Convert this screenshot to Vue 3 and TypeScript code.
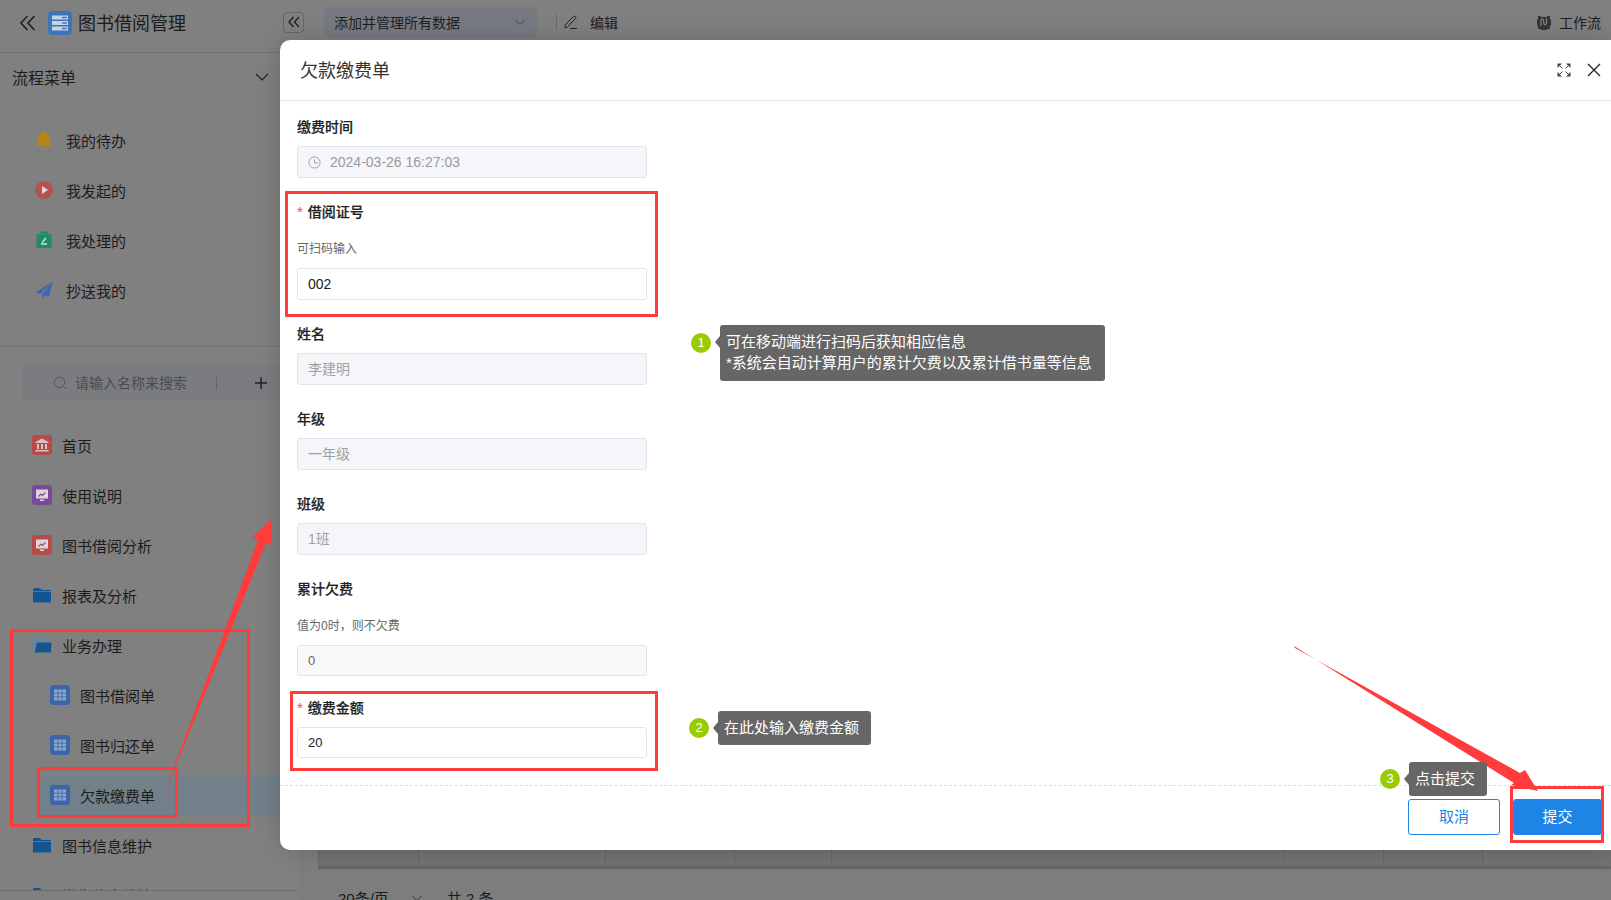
<script setup lang="ts">
const flowItems = [
  { label: '我的待办', icon: 'bell' },
  { label: '我发起的', icon: 'play' },
  { label: '我处理的', icon: 'clip' },
  { label: '抄送我的', icon: 'plane' }
]
const navItems = [
  { label: '首页', icon: 'bank' },
  { label: '使用说明', icon: 'chartPurple' },
  { label: '图书借阅分析', icon: 'chartRed' },
  { label: '报表及分析', icon: 'folder' },
  { label: '业务办理', icon: 'folderOpen' },
  { label: '图书借阅单', icon: 'table', sub: true },
  { label: '图书归还单', icon: 'table', sub: true },
  { label: '欠款缴费单', icon: 'table', sub: true, active: true },
  { label: '图书信息维护', icon: 'folder' },
  { label: '学生信息维护', icon: 'folder' }
]
const tableCols = [100, 187, 129, 97, 452, 100, 100]
const redBoxes = [
  { x: 11.5, y: 630.5, w: 237, h: 195 },
  { x: 38.5, y: 768.5, w: 138, h: 48 },
  { x: 286.5, y: 192.5, w: 370, h: 123 },
  { x: 291.5, y: 692.5, w: 365, h: 77 },
  { x: 1511.5, y: 787.5, w: 91, h: 54 }
]
</script>

<template>
  <div class="page">
    <aside class="sidebar">
      <div class="brand">
        <svg class="brand-back" viewBox="0 0 20 20" width="20" height="20"><path d="M9.5 3 3 10l6.500 7M16.500 3 10 10l6.500 7" fill="none" stroke="#222" stroke-width="1.700" /></svg>
        <svg viewBox="0 0 24 24" width="24" height="24"><rect width="24" height="24" rx="4" fill="#3f74b8" /><g fill="#c4d2e4"><rect x="4" y="4.500" width="16" height="4" /><rect x="4" y="10" width="16" height="4" /><rect x="4" y="15.500" width="16" height="4" /></g><g fill="#3f74b8"><rect x="14" y="5.800" width="5" height="1.400" /><rect x="14" y="11.300" width="5" height="1.400" /><rect x="14" y="16.800" width="5" height="1.400" /></g></svg>
        <span class="brand-title">图书借阅管理</span>
      </div>
      <div class="flow-head">
        <span>流程菜单</span>
        <svg viewBox="0 0 14 14" width="14" height="14"><path d="M1 4l6 6 6-6" fill="none" stroke="#222" stroke-width="1.200" /></svg>
      </div>
      <ul class="flow-list">
        <li v-for="item in flowItems" :key="item.label" class="flow-item">
          <svg viewBox="0 0 18 20" width="18" height="20">
            <path v-if="item.icon === 'bell'" d="M9 1c1 0 1.500.7 1.500 1.500C13.500 3.500 15 6 15 9v4l2.500 3h-17L3 13V9c0-3 1.500-5.500 4.500-6.500C7.500 1.700 8 1 9 1zM7 17.500h4C11 19 10 19.500 9 19.500S7 19 7 17.500z" fill="#b5851a" />
            <g v-else-if="item.icon === 'play'"><circle cx="9" cy="10" r="9" fill="#b5514f" /><path d="M7 6l6 4-6 4z" fill="#e4d6d6" /></g>
            <g v-else-if="item.icon === 'clip'"><rect x="1.500" y="4" width="15" height="14" rx="1" fill="#1f8a6c" /><rect x="5" y="1.500" width="8" height="2" fill="#1f8a6c" /><path d="M6 14h6M11 8l-4 4.500" stroke="#cfe3dc" stroke-width="1.300" fill="none" /></g>
            <path v-else d="M17.500 2 .5 12l5 2zM17.500 2 7 14.500V19l3-3.500 4 1.500z" fill="#3f66b0" />
          </svg>
          <span>{{ item.label }}</span>
        </li>
      </ul>
      <div class="search-wrap">
        <div class="search">
          <svg viewBox="0 0 14 14" width="14" height="14"><circle cx="6.500" cy="6.500" r="5.200" fill="none" stroke="#555" stroke-width="1" /><path d="M10.500 10.500l2.500 2.500" stroke="#555" /></svg>
          <span class="search-text">请输入名称来搜索</span>
          <i class="search-sep"></i>
          <svg class="search-plus" viewBox="0 0 12 12" width="12" height="12"><path d="M6 0v12M0 6h12" stroke="#222" stroke-width="1.500" /></svg>
        </div>
      </div>
      <ul class="nav">
        <li v-for="item in navItems" :key="item.label" class="nav-item" :class="{ sub: item.sub, active: item.active }">
          <svg viewBox="0 0 20 20" width="20" height="20">
            <g v-if="item.icon === 'bank'"><rect width="20" height="20" rx="3" fill="#b84a4a" /><path d="M10 3.500l6.500 3.500v1h-13V7zM5 9h2v5H5zM9 9h2v5H9zM13 9h2v5h-2zM3.500 15h13v1.500h-13z" fill="#dcc2c2" /></g>
            <g v-else-if="item.icon === 'chartPurple' || item.icon === 'chartRed'"><rect width="20" height="20" rx="3" :fill="item.icon === 'chartPurple' ? '#7a4a9a' : '#b84a4a'" /><path d="M4 4.500h12v9H4zM8 14.500h4v1.500H8z" fill="#dcd6de" /><path d="M6.500 11.500l2.500-2.500 1.500 1.500 3-3" fill="none" :stroke="item.icon === 'chartPurple' ? '#7a4a9a' : '#b84a4a'" stroke-width="1.200" /></g>
            <g v-else-if="item.icon === 'folder'"><path d="M1 4.500C1 3.500 1.500 3 2.500 3h5L10 5h8c.7 0 1 .4 1 1v10.500c0 .7-.4 1-1 1H2c-.7 0-1-.4-1-1z" fill="#14548f" /><path d="M1 6.500h18" stroke="#5f87ab" stroke-width=".7" /></g>
            <g v-else-if="item.icon === 'folderOpen'"><path d="M1 4.500C1 3.500 1.500 3 2.500 3h4.500L9.500 5H17c.7 0 1 .4 1 1v1H5L2 17.500H1z" fill="#5f87ab" /><path d="M5 7.500h14.500L19 16.500c0 .7-.4 1-1 1H2.500z" fill="#14548f" /></g>
            <g v-else><rect width="20" height="20" rx="3" fill="#3b66a8" /><path d="M4 4.500h12v11H4z" fill="#8fa5c8" /><path d="M8 4.500v11M12 4.500v11M4 8.200h12M4 11.800h12" stroke="#3b66a8" stroke-width=".8" /></g>
          </svg>
          <span>{{ item.label }}</span>
        </li>
      </ul>
      <div class="side-foot"></div>
    </aside>

    <main class="main">
      <div class="toolbar">
        <button class="collapse">
          <svg viewBox="0 0 14 14" width="14" height="14"><path d="M6.500 2 2 7l4.500 5M12 2 7.500 7l4.500 5" fill="none" stroke="#222" stroke-width="1.400" /></svg>
        </button>
        <div class="perm">
          <span>添加并管理所有数据</span>
          <svg viewBox="0 0 12 12" width="12" height="12"><path d="M1.500 4l4.500 4.500L10.500 4" fill="none" stroke="#444" stroke-width="1" /></svg>
        </div>
        <i class="tool-sep"></i>
        <svg viewBox="0 0 16 16" width="16" height="16"><path d="M2 13.500V11L10.500 2.500c.6-.6 1.400-.6 2 0s.6 1.400 0 2L4 13.500zM7 14.500h7" fill="none" stroke="#222" stroke-width="1" /></svg>
        <span class="edit">编辑</span>
        <div class="tool-right">
          <svg viewBox="0 0 16 17" width="16" height="17"><path d="M2 2h2.500l1 1h5l1-1H14v3l1 1v5l-1 1v3h-2.500l-1 1h-5l-1-1H2v-3l-1-1V6l1-1z" fill="#353535" /><path d="M5 12V6c0-2 2-2 2.500 0s0 5 1.500 5 1.500-2 1.500-4V4.500" fill="none" stroke="#999" stroke-width="1" /></svg>
          <span>工作流</span>
        </div>
      </div>
      <div class="table-row">
        <div v-for="(w, i) in tableCols" :key="i" class="cell" :class="'col-' + i">{{ i === 0 ? '2条' : '' }}</div>
      </div>
      <div class="pager">
        <span>20条/页</span>
        <svg viewBox="0 0 12 12" width="12" height="12"><path d="M1.500 4l4.500 4.500L10.500 4" fill="none" stroke="#333" stroke-width="1" /></svg>
        <span class="pager-total">共 2 条</span>
      </div>
    </main>

    <section class="modal">
      <header class="modal-head">
        <span class="modal-title">欠款缴费单</span>
        <svg class="icon-expand" viewBox="0 0 14 14" width="14" height="14"><g fill="#444"><path d="M.5.5H5L.5 5zM13.500.5H9L13.500 5zM.5 13.500H5L.5 9zM13.500 13.500H9L13.500 9z" /></g><path d="M2.500 2.500l3 3M11.500 2.500l-3 3M2.500 11.500l3-3M11.500 11.500l-3-3" stroke="#444" stroke-width="1" /></svg>
        <svg class="icon-close" viewBox="0 0 14 14" width="14" height="14"><path d="M1 1l12 12M13 1 1 13" stroke="#222" stroke-width="1.300" /></svg>
      </header>
      <div class="modal-body">
        <div class="field">
          <label class="label">缴费时间</label>
          <div class="input disabled">
            <svg viewBox="0 0 14 14" width="13" height="13"><circle cx="7" cy="7" r="6" fill="none" stroke="#999" /><path d="M7 3.500V7.500H10.500" fill="none" stroke="#999" /></svg>
            <span class="date">2024-03-26 16:27:03</span>
          </div>
        </div>
        <div class="field">
          <label class="label"><em>*</em>借阅证号</label>
          <div class="help help-a">可扫码输入</div>
          <div class="input">002</div>
        </div>
        <div class="field">
          <label class="label">姓名</label>
          <div class="input disabled cjk">李建明</div>
        </div>
        <div class="field">
          <label class="label">年级</label>
          <div class="input disabled cjk">一年级</div>
        </div>
        <div class="field">
          <label class="label">班级</label>
          <div class="input disabled cjk">1班</div>
        </div>
        <div class="field tight">
          <label class="label">累计欠费</label>
          <div class="help help-b">值为0时，则不欠费</div>
          <div class="input zero">0</div>
        </div>
        <div class="field">
          <label class="label"><em>*</em>缴费金额</label>
          <div class="input short">20</div>
        </div>
      </div>
      <footer class="modal-foot">
        <button class="btn ghost">取消</button>
        <button class="btn primary">提交</button>
      </footer>
    </section>

    <svg class="marks" viewBox="0 0 1611 900" width="1611" height="900">
      <rect v-for="(b, i) in redBoxes" :key="i" :x="b.x" :y="b.y" :width="b.w" :height="b.h" fill="none" stroke="#ff3b3b" stroke-width="3" />
      <polygon points="162,800 258,540 252,537 271,520 272,545 266,543" fill="#ff3b3b" />
      <polygon points="1294,646 1295,648 1520,773 1525,770 1538,791 1511,785 1514,783" fill="#ff3b3b" />
    </svg>

    <div class="note note-1">
      <b class="dot">1</b>
      <div class="tip">可在移动端进行扫码后获知相应信息<br />*系统会自动计算用户的累计欠费以及累计借书量等信息</div>
    </div>
    <div class="note note-2">
      <b class="dot">2</b>
      <div class="tip">在此处输入缴费金额</div>
    </div>
    <div class="note note-3">
      <b class="dot">3</b>
      <div class="tip">点击提交</div>
    </div>
  </div>
</template>

<style>
html, body { margin: 0; padding: 0; background: #808080; overflow: hidden; }
</style>

<style scoped>
.page {
  position: relative;
  width: 1611px;
  height: 900px;
  overflow: hidden;
  display: grid;
  grid-template-columns: 298px 1fr;
  background: #808080;
  color: #1c1c1c;
  font-family: "Liberation Sans", "Noto Sans CJK SC", sans-serif;
}
ul { list-style: none; margin: 0; padding: 0; }
.sidebar { display: flex; flex-direction: column; height: 900px; overflow: hidden; }
.brand {
  height: 53px; box-sizing: border-box; display: flex; align-items: center;
  padding: 0 0 6px 18px; border-bottom: 1px solid #747474;
  flex: none;
}
.brand-back { margin-right: 10px; }
.brand-title { font-size: 18px; margin-left: 6px; margin-top: -2px; }
.flow-head {
  flex: none; height: 48px; display: flex; align-items: center; justify-content: space-between;
  padding: 0 29px 0 12px; font-size: 16px; box-sizing: border-box;
}
.flow-list { flex: none; padding-top: 14px; height: 246px; box-sizing: border-box; border-bottom: 1px solid #747474; }
.flow-item { height: 50px; display: flex; align-items: center; padding-left: 35px; gap: 13px; font-size: 15px; }
.search-wrap { flex: none; padding: 18px 0 20px 22px; }
.search {
  height: 35px; background: #7a7c80; border-radius: 4px; display: flex; align-items: center;
  padding-left: 31px; font-size: 14px; color: #4c4c4c;
}
.search-text { margin: -2px 0 0 8px; }
.search-sep { width: 1px; height: 15px; background: #666; margin-left: 29px; }
.search-plus { margin-left: 38px; }
.nav { flex: 1; min-height: 0; overflow: hidden; display: flex; flex-direction: column; gap: 10px; padding-top: 5px; }
.nav-item {
  flex: none; height: 40px; display: flex; align-items: center; gap: 10px;
  padding-left: 32px; font-size: 15px;
}
.nav-item.sub { margin-left: 40px; padding-left: 10px; }
.nav-item.active { background: #72808a; }
.side-foot { flex: none; height: 9px; border-top: 1px solid #6e6e6e; background: #808080; }

.main { display: flex; flex-direction: column; height: 900px; background: linear-gradient(#808080 100px, #7d7d7d 100px); }
.toolbar { flex: none; height: 44px; display: flex; align-items: center; padding-right: 10px; }
.collapse {
  flex: none; width: 21px; height: 21px; margin-left: -15px; padding: 0; display: flex; align-items: center; justify-content: center;
  background: none; border: 1px solid #666; border-radius: 4px;
}
.perm {
  width: 213px; height: 31px; box-sizing: border-box; margin-left: 20px; background: #777a80; border-radius: 4px;
  display: flex; align-items: center; justify-content: space-between; padding: 0 11px 0 10px; font-size: 14px; color: #1f1f1f;
}
.tool-sep { width: 1px; height: 16px; background: #6c6c6c; margin: 0 6px 0 19px; }
.edit { font-size: 14px; margin-left: 11px; }
.tool-right { margin-left: auto; display: flex; align-items: center; gap: 7px; font-size: 14px; }
.table-row {
  flex: none; margin: 781px 0 0 20px; height: 44px; box-sizing: border-box; display: flex;
  border-bottom: 3px solid #666; background: #727272;
}
.cell { box-sizing: border-box; border-left: 1px solid #666; font-size: 14px; text-align: center; line-height: 24px; color: #222; flex: none; }
.col-0 { width: 100px; }
.col-1 { width: 187px; }
.col-2 { width: 129px; }
.col-3 { width: 97px; }
.col-4 { width: 452px; }
.col-5 { width: 100px; }
.col-6 { width: 100px; border-right: 1px solid #666; }
.pager { flex: none; display: flex; align-items: center; padding: 17px 0 0 40px; font-size: 15px; height: 40px; box-sizing: border-box; }
.pager svg { margin-left: 22px; }
.pager-total { margin-left: 24px; }

.modal {
  position: absolute; left: 280px; top: 40px; width: 1331px; height: 810px;
  background: #fff; border-radius: 10px 0 0 10px; display: flex; flex-direction: column;
  box-shadow: 0 0 24px rgba(0, 0, 0, .18); color: #222;
}
.modal-head {
  flex: none; height: 61px; box-sizing: border-box; display: flex; align-items: center;
  padding: 0 10px 0 20px; border-bottom: 1px solid #e4e4e4;
}
.modal-title { font-size: 18px; color: #333; margin-top: -3px; }
.icon-expand { margin-left: auto; margin-right: 16px; }
.modal-body { flex: 1; min-height: 0; padding: 15px 0 0 17px; }
.field { width: 350px; margin-bottom: 23px; }
.field.tight { margin-bottom: 21px; }
.label { display: block; height: 22px; line-height: 22px; font-size: 14px; font-weight: 500; -webkit-text-stroke: .2px #222; margin-bottom: 8px; }
.label em { font-style: normal; color: #f44; margin-right: 5px; font-size: 15px; -webkit-text-stroke: 0; }
.help { font-size: 12px; line-height: 20px; color: #666; }
.help-a { padding-top: 8px; margin-bottom: 9px; }
.help-b { padding-top: 8px; margin-bottom: 9px; }
.input {
  height: 32px; box-sizing: border-box; border: 1px solid #e2e4ec; border-radius: 3px; padding-left: 10px;
  display: flex; align-items: center; gap: 9px; font-size: 14px; color: #222;
}
.input.disabled { background: #f5f6fa; color: #a0a0a0; }
.input.cjk { padding-bottom: 2px; }
.input.zero { background: #f9f9f9; height: 31px; color: #666; font-size: 13px; padding-bottom: 1px; }
.input.short { height: 31px; font-size: 13px; }
.date { color: #9a9a9a; }
.modal-foot {
  flex: none; height: 65px; box-sizing: border-box; border-top: 1px dashed #dedede;
  display: flex; justify-content: flex-end; gap: 13px; padding: 13px 9px 0 0;
}
.btn { width: 92px; height: 36px; font-size: 15px; border-radius: 3px; font-family: inherit; padding: 0 0 3px; }
.ghost { background: #fff; border: 1px solid #1e85e6; color: #1e85e6; }
.primary { width: 89px; background: #1e85e6; border: 1px solid #1e85e6; color: #fff; }

.marks { position: absolute; left: 0; top: 0; pointer-events: none; }
.note { position: absolute; display: flex; align-items: center; }
.note-1 { left: 691px; top: 325px; }
.note-2 { left: 689px; top: 711px; }
.note-3 { left: 1380px; top: 762px; }
.note-1 .dot { margin-top: -21px; }
.dot {
  width: 20px; height: 20px; border-radius: 50%; background: #99cc00; color: #fff; font-weight: 400;
  font-size: 13px; text-align: center; line-height: 20px; flex: none;
}
.tip {
  position: relative; margin-left: 9px; background: #666; color: #fff; border-radius: 3px;
  font-size: 15px; line-height: 21px; padding: 6px 11px 7px 6px; white-space: nowrap;
}
.tip::before {
  content: ""; position: absolute; left: -5px; top: 11px; width: 0; height: 0;
  border-style: solid; border-width: 6px 5px 6px 0; border-color: transparent #666 transparent transparent;
}
.note-1 .tip { padding: 6px 13px 8px 6px; }
.note-2 .tip { padding: 6px 12px 7px 6px; }
.note-3 .tip { padding: 6px 12px 7px 6px; }
</style>
